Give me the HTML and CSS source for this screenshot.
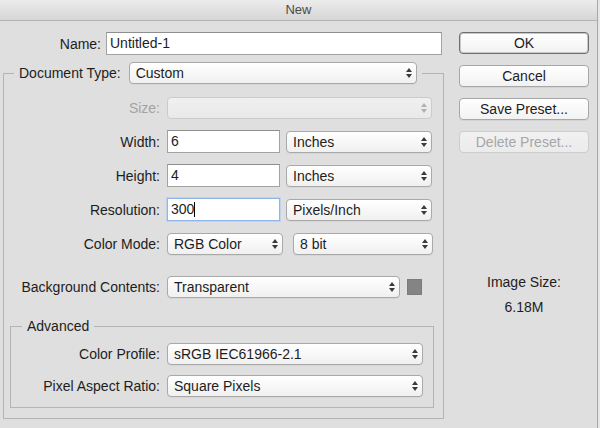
FILE: index.html
```html
<!DOCTYPE html>
<html>
<head>
	<meta charset="UTF-8">
	<title>New</title>
	<link rel="stylesheet" href="styles.css">
</head>
<body>
<div class="window">
	<div class="titlebar">New</div>
	<div class="content">
		<div class="main">
			<div class="name-row">
				<span class="name-label">Name:</span>
				<div class="field name-field">Untitled-1</div>
			</div>

			<fieldset class="doc">
				<legend class="doc-legend">
					<span class="legend-label">Document Type:</span>
					<div class="select doc-type">Custom</div>
				</legend>

				<div class="rows">
					<div class="row">
						<span class="lbl off">Size:</span>
						<div class="select disabled w-size"></div>
					</div>
					<div class="row">
						<span class="lbl">Width:</span>
						<div class="field w-num">6</div>
						<div class="select w-unit">Inches</div>
					</div>
					<div class="row">
						<span class="lbl">Height:</span>
						<div class="field w-num">4</div>
						<div class="select w-unit">Inches</div>
					</div>
					<div class="row">
						<span class="lbl">Resolution:</span>
						<div class="field w-num focus">300<span class="caret"></span></div>
						<div class="select w-unit">Pixels/Inch</div>
					</div>
					<div class="row">
						<span class="lbl">Color Mode:</span>
						<div class="select w-mode">RGB Color</div>
						<div class="select w-bits">8 bit</div>
					</div>
					<div class="row row-bg">
						<span class="lbl">Background Contents:</span>
						<div class="select w-bg">Transparent</div>
						<div class="swatch"></div>
					</div>
				</div>

				<fieldset class="advanced">
					<legend class="adv-legend">Advanced</legend>
					<div class="adv-rows">
						<div class="row adv-row">
							<span class="lbl adv-lbl">Color Profile:</span>
							<div class="select w-adv">sRGB IEC61966-2.1</div>
						</div>
						<div class="row adv-row">
							<span class="lbl adv-lbl">Pixel Aspect Ratio:</span>
							<div class="select w-adv">Square Pixels</div>
						</div>
					</div>
				</fieldset>
			</fieldset>
		</div>

		<div class="side">
			<div class="btn default">OK</div>
			<div class="btn">Cancel</div>
			<div class="btn">Save Preset...</div>
			<div class="btn disabled">Delete Preset...</div>

			<div class="image-size">
				<div>Image Size:</div>
				<div class="size-value">6.18M</div>
			</div>
		</div>
	</div>
</div>
</body>
</html>
```

FILE: styles.css
```css
	body {
		margin:0;
		background:#e6e6e6;
		font-family:"Liberation Sans", Arial, sans-serif;
		font-size:14px;
		color:#1d1d1d;
	}
	.window {
		width:598px;
		height:428px;
		background:#dfdfdf;
		border-right:1px solid #a8a8a8;
		box-sizing:border-box;
	}
	.titlebar {
		height:21px;
		line-height:20px;
		text-align:center;
		font-size:13px;
		color:#4b4b4b;
		background:linear-gradient(#ececec, #d6d6d6);
		border-bottom:1px solid #b3b3b3;
		box-sizing:border-box;
	}
	.content {
		display:flex;
	}
	.main {
		width:445px;
		flex:none;
	}

	/* champ Name */
	.name-row {
		display:flex;
		align-items:center;
		margin-top:11px;
		height:23px;
	}
	.name-label {
		width:101px;
		text-align:right;
		margin-right:5px;
	}
	.name-field {
		width:336px;
	}

	/* champs texte */
	.field {
		box-sizing:border-box;
		height:23px;
		line-height:21px;
		padding-left:3px;
		background:#fff;
		border:1px solid #a3a3a3;
		border-top-color:#8e8e8e;
		flex:none;
	}
	.field.focus {
		border-color:#8fb6e9;
		box-shadow:0 0 0 1px #bcd4f1;
	}
	.caret {
		display:inline-block;
		width:1px;
		height:15px;
		background:#000;
		vertical-align:-3px;
	}

	/* listes deroulantes */
	.select {
		position:relative;
		box-sizing:border-box;
		height:22px;
		line-height:20px;
		padding-left:6px;
		border:1px solid #a9a9a9;
		border-radius:4px;
		background:linear-gradient(#ffffff, #f0f0f0);
		box-shadow:0 1px 0 rgba(0,0,0,0.04);
		flex:none;
	}
	.select::before,
	.select::after {
		content:"";
		position:absolute;
		right:4px;
		border-left:3px solid transparent;
		border-right:3px solid transparent;
	}
	.select::before {
		top:5px;
		border-bottom:4px solid #3a3a3a;
	}
	.select::after {
		top:11px;
		border-top:4px solid #3a3a3a;
	}
	.select.disabled {
		border-color:#cbcbcb;
		background:linear-gradient(#f0f0f0, #e9e9e9);
		box-shadow:none;
	}
	.select.disabled::before { border-bottom-color:#b0b0b0; }
	.select.disabled::after { border-top-color:#b0b0b0; }

	/* cadre Document Type */
	.doc {
		margin:7px 0 0 3px;
		padding:0 0 10px 0;
		width:441px;
		min-width:0;
		box-sizing:border-box;
		border:1px solid #b4b4b4;
	}
	.doc-legend {
		display:flex;
		align-items:center;
		margin-left:10px;
		padding:0 5px;
	}
	.legend-label {
		margin-right:8px;
	}
	.doc-type {
		width:288px;
	}

	.rows {
		display:flex;
		flex-direction:column;
		gap:11px;
		margin-top:12px;
	}
	.row {
		display:flex;
		align-items:center;
		height:23px;
	}
	.row-bg {
		margin-top:9px;
	}
	.lbl {
		width:156px;
		text-align:right;
		margin-right:7px;
		flex:none;
		white-space:nowrap;
	}
	.lbl.off {
		color:#a3a3a3;
	}
	.w-size { width:265px; }
	.w-num { width:113px; }
	.w-unit { width:146px; margin-left:6px; }
	.w-mode { width:116px; }
	.w-bits { width:140px; margin-left:10px; }
	.w-bg { width:233px; }
	.w-adv { width:256px; }

	.swatch {
		width:15px;
		height:16px;
		margin-left:7px;
		background:#848484;
		border:1px solid #7c7c7c;
		box-sizing:border-box;
	}

	/* cadre Advanced */
	.advanced {
		margin:20px 0 0 6px;
		padding:0 0 10px 0;
		width:424px;
		min-width:0;
		box-sizing:border-box;
		border:1px solid #b4b4b4;
	}
	.adv-legend {
		margin-left:11px;
		padding:0 5px;
		line-height:16px;
	}
	.adv-rows {
		display:flex;
		flex-direction:column;
		gap:10px;
		margin-top:9px;
	}
	.adv-row {
		height:22px;
	}
	.adv-lbl {
		width:149px;
	}

	/* colonne de boutons */
	.side {
		display:flex;
		flex-direction:column;
		gap:11px;
		padding-left:14px;
		padding-top:11px;
	}
	.btn {
		box-sizing:border-box;
		width:130px;
		height:22px;
		line-height:20px;
		text-align:center;
		border:1px solid #a7a7a7;
		border-radius:4px;
		background:linear-gradient(#ffffff, #f2f2f2);
		box-shadow:0 1px 0 rgba(0,0,0,0.05);
	}
	.btn.default {
		border-color:#6e6e6e;
		box-shadow:inset 0 0 0 1px #c9c9c9;
	}
	.btn.disabled {
		color:#a6a6a6;
		border-color:#cccccc;
		background:linear-gradient(#f1f1f1, #ebebeb);
		box-shadow:none;
	}
	.image-size {
		width:130px;
		text-align:center;
		margin-top:110px;
		line-height:17px;
	}
	.size-value {
		margin-top:8px;
	}
```
